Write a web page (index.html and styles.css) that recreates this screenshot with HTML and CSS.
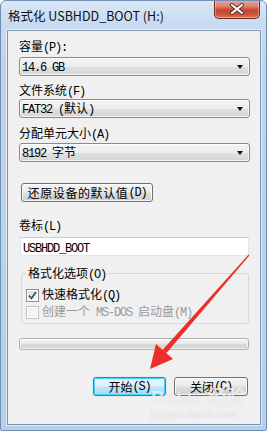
FILE: index.html
```html
<!DOCTYPE html>
<html>
<head>
<meta charset="utf-8">
<link rel="stylesheet" href="styles.css">
</head>
<body>
<div class="window">
  <div class="titlebar">
    <span class="title">格式化 USBHDD_BOOT (H:)</span>
    <div class="close">
      <svg width="16" height="12" viewBox="0 0 16 12">
        <path d="M3 2 L13 10 M13 2 L3 10" stroke="#5a2a24" stroke-width="4" stroke-linecap="round"/>
        <path d="M3 2 L13 10 M13 2 L3 10" stroke="#ffffff" stroke-width="2.2" stroke-linecap="round"/>
      </svg>
    </div>
  </div>
  <div class="client">
    <div class="lbl l1">容量<span class="m">(P):</span></div>
    <div class="combo c1"><span class="val"><span class="m">14.6 GB</span></span><i class="tri"></i></div>
    <div class="lbl l2">文件系统<span class="m">(F)</span></div>
    <div class="combo c2"><span class="val"><span class="m">FAT32 (</span>默认<span class="m">)</span></span><i class="tri"></i></div>
    <div class="lbl l3">分配单元大小<span class="m">(A)</span></div>
    <div class="combo c3"><span class="val"><span class="m">8192 </span>字节</span><i class="tri"></i></div>
    <div class="btn restore">还原设备的默认值<span class="m"> (D)</span></div>
    <div class="lbl l4">卷标<span class="m">(L)</span></div>
    <div class="input"><span class="m">USBHDD_BOOT</span></div>
    <fieldset class="group">
      <legend>格式化选项<span class="m">(O)</span></legend>
      <div class="chk r1">
        <span class="box on">
          <svg width="11" height="11" viewBox="0 0 11 11"><path d="M2 5.5 L4.5 8.3 L9 2" fill="none" stroke="#3b4f80" stroke-width="1.8"/></svg>
        </span>
        <span>快速格式化<span class="m">(Q)</span></span>
      </div>
      <div class="chk r2 disabled">
        <span class="box"></span>
        <span>创建一个<span class="m"> MS-DOS </span>启动盘<span class="m">(M)</span></span>
      </div>
    </fieldset>
    <div class="progress"></div>
    <div class="buttons">
      <div class="btn start">开始<span class="m">(S)</span></div>
      <div class="btn closebtn">关闭<span class="m">(C)</span></div>
    </div>
  </div>

  <svg class="redarrow" width="267" height="431" viewBox="0 0 267 431">
    <polygon points="248.6,254.6 249.4,255.4 166.5,353 162.5,350" fill="#ee2d28"/>
    <polygon points="150,369 156,344 173,359" fill="#ee2d28"/>
  </svg>

  <div class="watermark">
    <div class="wm1">Bai<span class="paw">du</span> 经验</div>
    <div class="wm2">jingyan.baidu.com</div>
  </div>
</div>
</body>
</html>
```

FILE: styles.css
```css
html, body {
  margin: 0;
  padding: 0;
  background: #ffffff;
}

body {
  font-family: "Noto Sans CJK SC", "Liberation Sans", sans-serif;
  font-size: 12px;
  color: #000;
}

.m {
  font-family: "Liberation Mono", monospace;
  letter-spacing: -1.2px;
}

.window {
  position: relative;
  box-sizing: border-box;
  width: 267px;
  height: 431px;
  border: 1px solid #6f8fb6;
  border-radius: 6px 6px 2px 2px;
  padding: 0 5px 5px 6px;
  background: linear-gradient(180deg, #dbe8f6 0px, #c9dcf1 20px, #bfd4ec 60px, #b9cfe8 100%);
  overflow: hidden;
}

.titlebar {
  display: flex;
  align-items: flex-start;
  height: 29px;
}

.title {
  margin-top: 7px;
  padding-left: 1px;
  font-size: 12.5px;
  line-height: 15px;
  color: #111;
  white-space: nowrap;
}

.close {
  margin-left: auto;
  margin-right: 1px;
  margin-top: -1px;
  width: 46px;
  height: 19px;
  box-sizing: border-box;
  border: 1px solid #6b2a22;
  border-top: none;
  border-radius: 0 0 5px 5px;
  background: linear-gradient(180deg, #e9a99c 0%, #d9826f 35%, #c8452f 55%, #c9543e 80%, #db7a60 100%);
  display: flex;
  align-items: center;
  justify-content: center;
  box-shadow: inset 0 0 0 1px rgba(255, 255, 255, 0.35);
}

.client {
  box-sizing: border-box;
  height: 395px;
  border: 1px solid #8293a9;
  background: #f0f0f0;
  padding: 0 10px 0 11px;
  box-shadow: 0 0 0 1px rgba(255, 255, 255, 0.6);
}

.lbl {
  height: 14px;
  line-height: 14px;
  white-space: nowrap;
}

.l1 { margin-top: 8px; }
.l2 { margin-top: 7px; }
.l3 { margin-top: 8px; }
.l4 { margin-top: 16px; }

.combo {
  box-sizing: border-box;
  height: 19px;
  display: flex;
  align-items: center;
  border: 1px solid #8b8b8b;
  border-radius: 3px;
  background: linear-gradient(180deg, #f4f4f4 0%, #ececec 50%, #e0e0e0 51%, #d6d6d6 100%);
  padding-left: 2px;
  box-shadow: inset 0 0 0 1px rgba(255, 255, 255, 0.7);
}

.c1 { margin-top: 4px; }
.c2 { margin-top: 2px; }
.c3 { margin-top: 3px; }

.val {
  flex: 1;
  line-height: 14px;
  white-space: nowrap;
}

.tri {
  width: 0;
  height: 0;
  border-left: 3.5px solid transparent;
  border-right: 3.5px solid transparent;
  border-top: 4px solid #111;
  margin-right: 6px;
  margin-top: 1px;
}

.btn {
  box-sizing: border-box;
  height: 19px;
  display: flex;
  align-items: center;
  justify-content: center;
  border: 1px solid #707070;
  border-radius: 3px;
  background: linear-gradient(180deg, #f3f3f3 0%, #ebebeb 48%, #dddddd 52%, #cfcfcf 100%);
  box-shadow: inset 0 0 0 1px rgba(255, 255, 255, 0.8);
  line-height: 14px;
  white-space: nowrap;
}

.restore {
  margin-top: 21px;
  margin-left: 2px;
  width: 132px;
  letter-spacing: 0.6px;
}

.input {
  box-sizing: border-box;
  margin-top: 5px;
  margin-left: 1px;
  width: 229px;
  height: 19px;
  background: #fff;
  border: 1px solid #e2e6ea;
  border-top-color: #c9ced4;
  padding-left: 2px;
  line-height: 17px;
}

.group {
  box-sizing: border-box;
  margin: 10px 0 0 2px;
  width: 228px;
  height: 58px;
  border: 1px solid #d3dae0;
  border-radius: 3px;
  padding: 0 0 0 4px;
  min-width: 0;
}

.group legend {
  padding: 0 2px;
  margin-left: 0;
  line-height: 14px;
  height: 14px;
  white-space: nowrap;
}

.chk {
  display: flex;
  align-items: center;
  height: 14px;
  line-height: 14px;
  white-space: nowrap;
}

.r1 { margin-top: 8px; }
.r2 { margin-top: 3px; }

.box {
  box-sizing: border-box;
  width: 13px;
  height: 13px;
  margin-right: 3px;
  border: 1px solid #8e8f8f;
  background: linear-gradient(135deg, #d8d8d8 0%, #f2f2f2 60%, #fbfbfb 100%);
  box-shadow: inset 0 0 0 1px #ffffff;
  display: flex;
  align-items: center;
  justify-content: center;
}

.disabled { color: #9a9a9a; }

.disabled .box {
  border-color: #c5c5c5;
  background: #f4f4f4;
}

.progress {
  box-sizing: border-box;
  margin-top: 14px;
  width: 230px;
  height: 12px;
  border: 1px solid #b1b1b1;
  border-radius: 3px;
  background: linear-gradient(180deg, #f6f6f6 0%, #e9e9e9 45%, #dadada 55%, #d3d3d3 100%);
  box-shadow: inset 0 0 0 1px rgba(255, 255, 255, 0.7);
}

.buttons {
  display: flex;
  margin-top: 27px;
  padding-left: 74px;
  gap: 8px;
}

.buttons .btn {
  height: 19px;
}

.start {
  width: 73px;
  border-color: #3c7fb1;
  background: linear-gradient(180deg, #eaf6fd 0%, #d9f0fc 48%, #bee6fd 52%, #a7d9f5 100%);
  box-shadow: inset 0 0 0 1px #48d6f8, 0 0 1px #7ac;
}

.closebtn {
  width: 74px;
}

.redarrow {
  position: absolute;
  left: -1px;
  top: -1px;
  pointer-events: none;
}

.watermark {
  position: absolute;
  left: 150px;
  top: 387px;
  pointer-events: none;
  color: rgba(255, 255, 255, 0.7);
  text-shadow: 0 0 1px rgba(140, 140, 140, 0.35);
}

.wm1 {
  font-family: "Liberation Sans", "Noto Sans CJK SC", sans-serif;
  font-weight: bold;
  font-size: 19px;
  line-height: 20px;
  letter-spacing: 0.5px;
}

.wm1 .paw {
  font-size: 15px;
}

.wm2 {
  font-family: "Liberation Sans", sans-serif;
  font-size: 10px;
  line-height: 12px;
  color: rgba(255, 255, 255, 0.6);
  letter-spacing: 0.3px;
}
```
